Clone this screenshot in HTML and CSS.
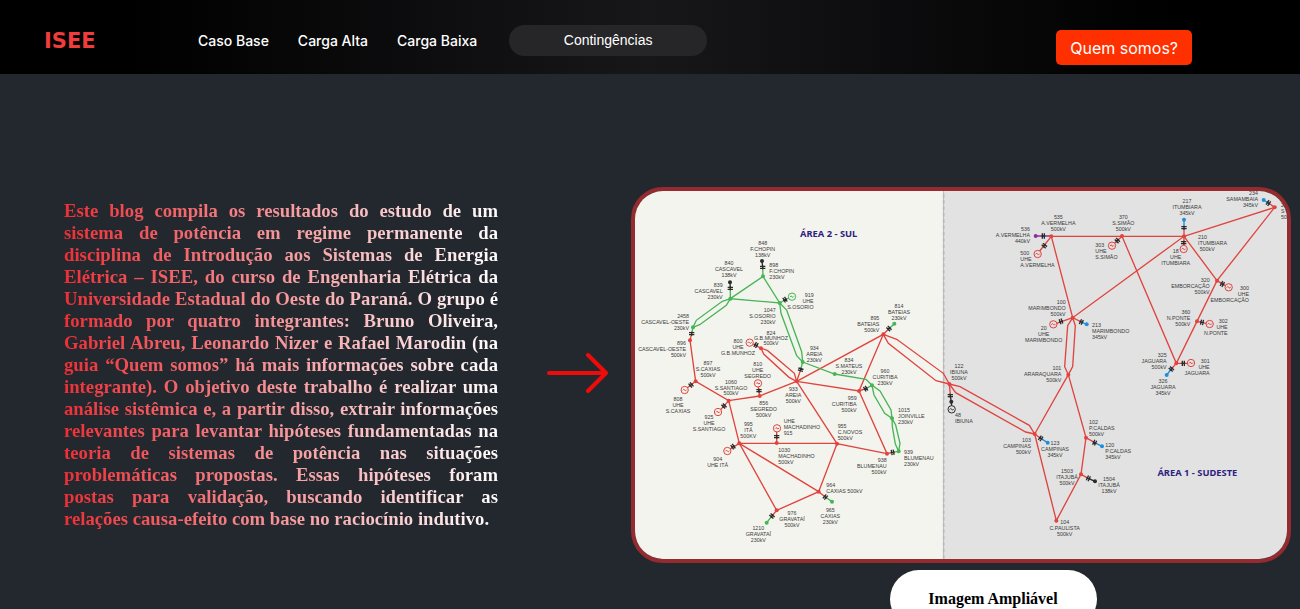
FILE: index.html
```html
<!DOCTYPE html>
<html lang="pt-BR">
<head>
<meta charset="utf-8">
<meta name="viewport" content="width=device-width, initial-scale=1">
<title>ISEE</title>
<link rel="stylesheet" href="styles.css">
</head>
<body>
<header class="topbar">
  <a class="logo" href="#">ISEE</a>
  <nav class="nav">
    <a href="#">Caso Base</a>
    <a href="#">Carga Alta</a>
    <a href="#">Carga Baixa</a>
    <button class="nav-menu" type="button">Contingências</button>
  </nav>
  <button class="about" type="button">Quem somos?</button>
</header>

<main class="hero">
  <h3 class="intro">Este blog compila os resultados do estudo de um sistema de potência em regime permanente da disciplina de Introdução aos Sistemas de Energia Elétrica – ISEE, do curso de Engenharia Elétrica da Universidade Estadual do Oeste do Paraná. O grupo é formado por quatro integrantes: Bruno Oliveira, Gabriel Abreu, Leonardo Nizer e Rafael Marodin (na guia “Quem somos” há mais informações sobre cada integrante). O objetivo deste trabalho é realizar uma análise sistêmica e, a partir disso, extrair informações relevantes para levantar hipóteses fundamentadas na teoria de sistemas de potência nas situações problemáticas propostas. Essas hipóteses foram postas&nbsp;para validação, buscando identificar as relações&nbsp;causa-efeito com base no raciocínio indutivo.</h3>

  <svg class="arrow" viewBox="0 0 61 40" aria-hidden="true"><path d="M2 20H57M41 2L59 20L41 38"/></svg>

  <figure class="diagram">
    <svg viewBox="0 0 1956 1104" preserveAspectRatio="xMidYMid slice" role="img" aria-label="Diagrama do sistema elétrico">
      <defs>
        <path id="brk" d="M-3-8V8M3-8V8M-6 0H6"/>
        <g id="gen"><circle r="11"/><path d="M-6 1Q-3-5 0 0T6-1"/></g>
        <circle id="bus" r="6"/>
      </defs>
      <rect class="sul" width="926" height="1104"/>
      <rect class="sudeste" x="926" width="1030" height="1104"/>
      <path class="divider" d="M926 8V1104"/>

      <g class="line red">
        <path d="M378 471L398 479L478 547L485 571M378 471L386 489L462 559L485 571"/>
        <path d="M745 430L785 445L925 547L943 579M745 430L760 457L903 569L943 579"/>
        <path d="M943 579L975 587L1183 703L1199 729M943 579L962 605L1172 723L1199 729"/>
        <path d="M1313 380L1298 404L1289 527L1300 551M1313 380L1321 404L1313 527L1300 551"/>
        <path d="M485 571L745 430L672 600L485 571L606 758L756 788L672 600"/>
        <path d="M606 758L551 902L425 958L313 757L551 902M313 757H606"/>
        <path d="M165 448L182 571L281 629L374 615L485 571M281 629L313 757"/>
        <path d="M1249 136H1647L1919 49L1746 269L1686 391L1624 517L1461 136M1249 136L1313 380L1647 136L1746 269"/>
        <path d="M1300 551L1199 729L1264 989L1338 850L1353 740Z"/>
        <path d="M378 472L355 459M182 571L157 590M281 629L257 656M374 615L370 588M313 757L286 774M425 756V723M485 571L497 536M672 600L692 593M756 788L773 784M745 430L762 413M551 902L571 918M425 958L411 975M170 428L165 448"/>
        <path d="M1249 136L1214 180M1461 136L1439 157M1313 380L1265 397M1313 380L1339 393M1647 110V163M1746 269L1771 284M1686 391L1713 397M1624 517H1657M1624 517L1609 534M1919 49L1900 36M1199 729L1217 742M1353 740L1379 755M1338 850L1360 862M943 579L946 614"/>
      </g>
      <g class="line green">
        <path d="M174 409L184 388L262 331L286 323L274 343L194 401Z"/>
        <path d="M286 323L384 256L434 336Z"/>
        <path d="M434 336L455 357L500 482L503 513L485 494L438 367Z"/>
        <path d="M503 513L599 549L693 565L711 583L735 600L768 657L771 682L749 667L717 612L711 583"/>
        <path d="M771 682L782 702L795 757L791 781L781 759L772 707Z"/>
        <path d="M434 336L461 321M503 513L497 536M711 583L692 593M791 781L773 784M778 398L762 413M591 932L571 918M395 995L411 975M174 409L170 428M384 256L383 229M286 323V292"/>
      </g>
      <path class="line blue" d="M1355 400L1339 393M1647 86V110M1595 552L1609 534M1886 27L1900 36M1238 755L1217 742M1401 766L1379 755"/>
      <path class="line dark" d="M381 210L383 229M285 274L286 292M946 614L950 644M1380 871L1360 862"/>
      <path class="line violet" d="M1202 135H1249"/>

      <g class="gen red">
        <use href="#gen" x="344" y="455"/><use href="#gen" x="149" y="597"/><use href="#gen" x="249" y="663"/><use href="#gen" x="369" y="577"/><use href="#gen" x="277" y="780"/><use href="#gen" x="426" y="712"/>
        <use href="#gen" x="1208" y="189"/><use href="#gen" x="1431" y="164"/><use href="#gen" x="1255" y="400"/><use href="#gen" x="1646" y="174"/><use href="#gen" x="1781" y="289"/><use href="#gen" x="1724" y="399"/><use href="#gen" x="1668" y="516"/>
      </g>
      <g class="gen green"><use href="#gen" x="471" y="317"/></g>
      <g class="gen dark"><use href="#gen" x="950" y="655"/></g>

      <g class="bus red">
        <use href="#bus" x="165" y="448"/><use href="#bus" x="485" y="571"/><use href="#bus" x="378" y="472"/><use href="#bus" x="745" y="430"/><use href="#bus" x="182" y="571"/><use href="#bus" x="281" y="629"/><use href="#bus" x="374" y="615"/><use href="#bus" x="313" y="757"/><use href="#bus" x="425" y="756"/><use href="#bus" x="606" y="758"/><use href="#bus" x="551" y="902"/><use href="#bus" x="425" y="958"/><use href="#bus" x="672" y="600"/><use href="#bus" x="756" y="788"/><use href="#bus" x="943" y="579"/>
        <use href="#bus" x="1249" y="136"/><use href="#bus" x="1461" y="135"/><use href="#bus" x="1313" y="380"/><use href="#bus" x="1300" y="551"/><use href="#bus" x="1647" y="136"/><use href="#bus" x="1919" y="49"/><use href="#bus" x="1746" y="269"/><use href="#bus" x="1686" y="391"/><use href="#bus" x="1624" y="517"/><use href="#bus" x="1199" y="729"/><use href="#bus" x="1353" y="740"/><use href="#bus" x="1338" y="850"/><use href="#bus" x="1264" y="989"/>
      </g>
      <g class="bus green">
        <use href="#bus" x="384" y="256"/><use href="#bus" x="286" y="323"/><use href="#bus" x="174" y="409"/><use href="#bus" x="434" y="336"/><use href="#bus" x="503" y="513"/><use href="#bus" x="599" y="549"/><use href="#bus" x="778" y="398"/><use href="#bus" x="591" y="932"/><use href="#bus" x="395" y="995"/><use href="#bus" x="711" y="583"/><use href="#bus" x="771" y="682"/><use href="#bus" x="791" y="781"/>
      </g>
      <g class="bus blue">
        <use href="#bus" x="1355" y="400"/><use href="#bus" x="1647" y="86"/><use href="#bus" x="1886" y="27"/><use href="#bus" x="1595" y="552"/><use href="#bus" x="1238" y="755"/><use href="#bus" x="1401" y="766"/>
      </g>
      <g class="bus dark">
        <use href="#bus" x="381" y="210"/><use href="#bus" x="285" y="274"/><use href="#bus" x="949" y="632"/><use href="#bus" x="1380" y="871"/>
      </g>
      <g class="bus violet"><use href="#bus" x="1202" y="135"/></g>

      <g class="breaker">
        <use href="#brk" transform="translate(383 229) rotate(90)"/><use href="#brk" transform="translate(286 292) rotate(90)"/><use href="#brk" transform="translate(170 428) rotate(90)"/><use href="#brk" transform="translate(450 326) rotate(-30)"/><use href="#brk" transform="translate(497 536) rotate(105)"/><use href="#brk" transform="translate(363 462) rotate(30)"/><use href="#brk" transform="translate(762 413) rotate(-45)"/><use href="#brk" transform="translate(168 582) rotate(-40)"/><use href="#brk" transform="translate(267 645) rotate(-45)"/><use href="#brk" transform="translate(372 599) rotate(90)"/><use href="#brk" transform="translate(294 767) rotate(-35)"/><use href="#brk" transform="translate(425 737) rotate(90)"/><use href="#brk" transform="translate(571 918) rotate(40)"/><use href="#brk" transform="translate(411 975) rotate(-50)"/><use href="#brk" transform="translate(692 593) rotate(-30)"/><use href="#brk" transform="translate(773 784) rotate(-10)"/><use href="#brk" transform="translate(946 614) rotate(90)"/>
        <use href="#brk" transform="translate(1225 135)"/><use href="#brk" transform="translate(1228 164) rotate(-50)"/><use href="#brk" transform="translate(1447 149) rotate(-45)"/><use href="#brk" transform="translate(1278 391) rotate(-20)"/><use href="#brk" transform="translate(1339 393) rotate(25)"/><use href="#brk" transform="translate(1647 110) rotate(90)"/><use href="#brk" transform="translate(1646 155) rotate(90)"/><use href="#brk" transform="translate(1900 36) rotate(35)"/><use href="#brk" transform="translate(1762 279) rotate(30)"/><use href="#brk" transform="translate(1701 394) rotate(12)"/><use href="#brk" transform="translate(1645 517)"/><use href="#brk" transform="translate(1609 534) rotate(-50)"/><use href="#brk" transform="translate(1217 742) rotate(35)"/><use href="#brk" transform="translate(1379 755) rotate(25)"/><use href="#brk" transform="translate(1360 862) rotate(25)"/>
      </g>

      <g class="area">
        <text x="581" y="138">ÁREA 2 - SUL</text>
        <text x="1687" y="854">ÁREA 1 - SUDESTE</text>
      </g>

      <g class="label mid">
        <text y="162"><tspan x="383">848</tspan><tspan x="383" dy="18">F.CHOPIN</tspan><tspan x="383" dy="18">138kV</tspan></text>
        <text y="222"><tspan x="282">840</tspan><tspan x="282" dy="18">CASCAVEL</tspan><tspan x="282" dy="18">138kV</tspan></text>
        <text y="431"><tspan x="408">824</tspan><tspan x="408" dy="17">G.B.MUNHOZ</tspan><tspan x="408" dy="15">500kV</tspan></text>
        <text y="457"><tspan x="309">800</tspan><tspan x="309" dy="18">UHE</tspan><tspan x="309" dy="18">G.B.MUNHOZ</tspan></text>
        <text y="477"><tspan x="538">934</tspan><tspan x="538" dy="18">AREIA</tspan><tspan x="538" dy="18">230kV</tspan></text>
        <text y="521"><tspan x="219">897</tspan><tspan x="219" dy="18">S.CAXIAS</tspan><tspan x="219" dy="18">500kV</tspan></text>
        <text y="525"><tspan x="368">810</tspan><tspan x="368" dy="18">UHE</tspan><tspan x="368" dy="18">SEGREDO</tspan></text>
        <text y="580"><tspan x="288">1060</tspan><tspan x="288" dy="17">S.SANTIAGO</tspan><tspan x="288" dy="15">500kV</tspan></text>
        <text y="629"><tspan x="129">808</tspan><tspan x="129" dy="18">UHE</tspan><tspan x="129" dy="18">S.CAXIAS</tspan></text>
        <text y="685"><tspan x="222">925</tspan><tspan x="222" dy="18">UHE</tspan><tspan x="222" dy="18">S.SANTIAGO</tspan></text>
        <text y="641"><tspan x="386">856</tspan><tspan x="386" dy="18">SEGREDO</tspan><tspan x="386" dy="18">500kV</tspan></text>
        <text y="600"><tspan x="475">933</tspan><tspan x="475" dy="18">AREIA</tspan><tspan x="475" dy="18">500kV</tspan></text>
        <text y="705"><tspan x="340">995</tspan><tspan x="340" dy="18">ITÁ</tspan><tspan x="340" dy="18">500KV</tspan></text>
        <text y="810"><tspan x="248">904</tspan><tspan x="248" dy="18">UHE ITÁ</tspan></text>
        <text y="973"><tspan x="471">976</tspan><tspan x="471" dy="18">GRAVATAÍ</tspan><tspan x="471" dy="18">500kV</tspan></text>
        <text y="1017"><tspan x="370">1210</tspan><tspan x="370" dy="18">GRAVATAÍ</tspan><tspan x="370" dy="18">230kV</tspan></text>
        <text y="351"><tspan x="792">814</tspan><tspan x="792" dy="18">BATEIAS</tspan><tspan x="792" dy="18">230kV</tspan></text>
        <text y="513"><tspan x="642">834</tspan><tspan x="642" dy="18">S.MATEUS</tspan><tspan x="642" dy="18">230kV</tspan></text>
        <text y="531"><tspan x="972">122</tspan><tspan x="972" dy="18">IBIUNA</tspan><tspan x="972" dy="18">500kV</tspan></text>
        <text y="547"><tspan x="750">960</tspan><tspan x="750" dy="18">CURITIBA</tspan><tspan x="750" dy="18">230kV</tspan></text>
        <text y="963"><tspan x="586">965</tspan><tspan x="586" dy="18">CAXIAS</tspan><tspan x="586" dy="18">230kV</tspan></text>
        <text y="84"><tspan x="1270">535</tspan><tspan x="1270" dy="18">A.VERMELHA</tspan><tspan x="1270" dy="18">500kV</tspan></text>
        <text y="84"><tspan x="1465">370</tspan><tspan x="1465" dy="18">S.SIMÃO</tspan><tspan x="1465" dy="18">500kV</tspan></text>
        <text y="417"><tspan x="1226">20</tspan><tspan x="1226" dy="18">UHE</tspan><tspan x="1226" dy="18">MARIMBONDO</tspan></text>
        <text y="35"><tspan x="1656">217</tspan><tspan x="1656" dy="18">ITUMBIARA</tspan><tspan x="1656" dy="18">345kV</tspan></text>
        <text y="186"><tspan x="1622">18</tspan><tspan x="1622" dy="18">UHE</tspan><tspan x="1622" dy="18">ITUMBIARA</tspan></text>
        <text y="576"><tspan x="1584">326</tspan><tspan x="1584" dy="18">JAGUARA</tspan><tspan x="1584" dy="18">345kV</tspan></text>
        <text y="761"><tspan x="1260">123</tspan><tspan x="1260" dy="18">CAMPINAS</tspan><tspan x="1260" dy="18">345kV</tspan></text>
        <text y="846"><tspan x="1296">1503</tspan><tspan x="1296" dy="18">ITAJUBÁ</tspan><tspan x="1296" dy="18">500kV</tspan></text>
        <text y="870"><tspan x="1422">1504</tspan><tspan x="1422" dy="18">ITAJUBÁ</tspan><tspan x="1422" dy="18">138kV</tspan></text>
        <text y="1000"><tspan x="1289">104</tspan><tspan x="1289" dy="18">C.PAULISTA</tspan><tspan x="1289" dy="18">500kV</tspan></text>
      </g>
      <g class="label end">
        <text y="287"><tspan x="263">839</tspan><tspan x="263" dy="18">CASCAVEL</tspan><tspan x="263" dy="18">230kV</tspan></text>
        <text y="319"><tspan x="536">919</tspan><tspan x="536" dy="18">UHE</tspan><tspan x="536" dy="18">S.OSORIO</tspan></text>
        <text y="362"><tspan x="422">1047</tspan><tspan x="422" dy="18">S.OSORIO</tspan><tspan x="422" dy="18">230kV</tspan></text>
        <text y="381"><tspan x="162">2458</tspan><tspan x="162" dy="18">CASCAVEL-OESTE</tspan><tspan x="162" dy="18">230kV</tspan></text>
        <text y="461"><tspan x="153">896</tspan><tspan x="153" dy="18">CASCAVEL-OESTE</tspan><tspan x="153" dy="18">500kV</tspan></text>
        <text y="388"><tspan x="733">895</tspan><tspan x="733" dy="18">BATEIAS</tspan><tspan x="733" dy="18">500kV</tspan></text>
        <text y="627"><tspan x="665">959</tspan><tspan x="665" dy="18">CURITIBA</tspan><tspan x="665" dy="18">500kV</tspan></text>
        <text y="814"><tspan x="755">938</tspan><tspan x="755" dy="18">BLUMENAU</tspan><tspan x="755" dy="18">500kV</tspan></text>
        <text y="119"><tspan x="1185">536</tspan><tspan x="1185" dy="18">A.VERMELHA</tspan><tspan x="1185" dy="18">440kV</tspan></text>
        <text y="340"><tspan x="1292">100</tspan><tspan x="1292" dy="18">MARIMBONDO</tspan><tspan x="1292" dy="18">500kV</tspan></text>
        <text y="538"><tspan x="1279">101</tspan><tspan x="1279" dy="18">ARARAQUARA</tspan><tspan x="1279" dy="18">500kV</tspan></text>
        <text y="11"><tspan x="1869">234</tspan><tspan x="1869" dy="18">SAMAMBAIA</tspan><tspan x="1869" dy="18">345kV</tspan></text>
        <text y="272"><tspan x="1724">320</tspan><tspan x="1724" dy="18">EMBORCAÇÃO</tspan><tspan x="1724" dy="18">500kV</tspan></text>
        <text y="296"><tspan x="1842">300</tspan><tspan x="1842" dy="18">UHE</tspan><tspan x="1842" dy="18">EMBORCAÇÃO</tspan></text>
        <text y="370"><tspan x="1666">360</tspan><tspan x="1666" dy="18">N.PONTE</tspan><tspan x="1666" dy="18">500kV</tspan></text>
        <text y="395"><tspan x="1778">302</tspan><tspan x="1778" dy="18">UHE</tspan><tspan x="1778" dy="18">N.PONTE</tspan></text>
        <text y="497"><tspan x="1595">325</tspan><tspan x="1595" dy="18">JAGUARA</tspan><tspan x="1595" dy="18">500kV</tspan></text>
        <text y="516"><tspan x="1724">301</tspan><tspan x="1724" dy="18">UHE</tspan><tspan x="1724" dy="18">JAGUARA</tspan></text>
        <text y="753"><tspan x="1188">103</tspan><tspan x="1188" dy="18">CAMPINAS</tspan><tspan x="1188" dy="18">500kV</tspan></text>
      </g>
      <g class="label">
        <text y="228"><tspan x="403">898</tspan><tspan x="403" dy="18">F.CHOPIN</tspan><tspan x="403" dy="18">230kV</tspan></text>
        <text y="695"><tspan x="446">UHE</tspan><tspan x="446" dy="18">MACHADINHO</tspan><tspan x="446" dy="18">915</tspan></text>
        <text y="782"><tspan x="430">1030</tspan><tspan x="430" dy="18">MACHADINHO</tspan><tspan x="430" dy="18">500kV</tspan></text>
        <text y="663"><tspan x="789">1015</tspan><tspan x="789" dy="18">JOINVILLE</tspan><tspan x="789" dy="18">230kV</tspan></text>
        <text y="711"><tspan x="608">955</tspan><tspan x="608" dy="18">C.NOVOS</tspan><tspan x="608" dy="18">500kV</tspan></text>
        <text y="788"><tspan x="807">939</tspan><tspan x="807" dy="18">BLUMENAU</tspan><tspan x="807" dy="18">230kV</tspan></text>
        <text y="889"><tspan x="574">964</tspan><tspan x="574" dy="18">CAXIAS 500kV</tspan></text>
        <text y="678"><tspan x="960">48</tspan><tspan x="960" dy="18">IBIUNA</tspan></text>
        <text y="192"><tspan x="1156">500</tspan><tspan x="1156" dy="18">UHE</tspan><tspan x="1156" dy="18">A.VERMELHA</tspan></text>
        <text y="169"><tspan x="1381">303</tspan><tspan x="1381" dy="18">UHE</tspan><tspan x="1381" dy="18">S.SIMÃO</tspan></text>
        <text y="408"><tspan x="1371">213</tspan><tspan x="1371" dy="18">MARIMBONDO</tspan><tspan x="1371" dy="18">345kV</tspan></text>
        <text y="48"><tspan x="1938">2</tspan><tspan x="1938" dy="18">S</tspan><tspan x="1938" dy="18">50</tspan></text>
        <text y="144"><tspan x="1689">210</tspan><tspan x="1689" dy="18">ITUMBIARA</tspan><tspan x="1694" dy="18">500kV</tspan></text>
        <text y="699"><tspan x="1362">102</tspan><tspan x="1362" dy="18">P.CALDAS</tspan><tspan x="1362" dy="18">500kV</tspan></text>
        <text y="769"><tspan x="1411">120</tspan><tspan x="1411" dy="18">P.CALDAS</tspan><tspan x="1411" dy="18">345kV</tspan></text>
      </g>
    </svg>
  </figure>

  <div class="actions"><button class="enlarge" type="button">Imagem Ampliável</button></div>
</main>
</body>
</html>
```

FILE: styles.css
```css
* { box-sizing: border-box; }

body {
  margin: 0;
  background: #23272e;
  color: #fff;
  font-family: "Liberation Serif", "Times New Roman", serif;
}

button {
  border: 0;
  cursor: pointer;
}

.topbar {
  display: flex;
  align-items: center;
  height: 74px;
  padding: 0 108px 0 44px;
  background: linear-gradient(90deg, #000 10%, #17171a 50%, #000 90%);
}

.logo {
  width: 154px;
  padding-top: 8px;
  color: #f03c3c;
  font: bold 21px "DejaVu Sans", sans-serif;
  text-decoration: none;
}

.nav {
  display: flex;
  align-items: center;
  gap: 29px;
  padding-top: 6px;
}

.nav a {
  color: #fff;
  font: 500 14px Inter, sans-serif;
  text-decoration: none;
}

.nav-menu {
  width: 198px;
  height: 31px;
  margin-left: 3px;
  border-radius: 16px;
  background: #262628;
  color: #fff;
  font: 14px "Liberation Sans", Arial, sans-serif;
}

.about {
  height: 35px;
  margin: 21px 0 0 auto;
  padding: 0 14px;
  border-radius: 5px;
  background: #ff3000;
  color: #fff;
  font: 16px Inter, sans-serif;
}

.hero {
  display: grid;
  grid-template-columns: 483fr 61px 683fr;
  align-items: center;
  padding: 113px 9px 0 64px;
}

.intro {
  margin: 0 49px 20px 0;
  background: linear-gradient(90deg, #ee2f35, #fff);
  background-clip: text;
  -webkit-background-clip: text;
  color: transparent;
  line-height: 22px;
  text-align: justify;
}

.arrow {
  width: 61px;
  margin-bottom: 4px;
  fill: none;
  stroke: #f00b0b;
  stroke-width: 4;
  stroke-linecap: round;
  stroke-linejoin: round;
}

.diagram {
  margin: 0 0 0 23px;
  overflow: hidden;
  border: 4px solid #952b2f;
  border-radius: 32px;
}

.diagram svg {
  display: block;
  width: 100%;
}

.sul { fill: #f4f4ee; }
.sudeste { fill: #e2e2e2; }
.divider { stroke: #b9b9bd; stroke-width: 5; stroke-dasharray: 12 7; }

.red { --ink: #e0443e; }
.green { --ink: #45b556; }
.blue { --ink: #1e8fdc; }
.dark { --ink: #2b2b2b; }
.violet { --ink: #8a2f9b; }

.line { fill: none; stroke: var(--ink); stroke-width: 4; }
.gen { fill: none; stroke: var(--ink); stroke-width: 3; }
.bus { fill: var(--ink); }
.breaker { fill: none; stroke: #2b2b2b; stroke-width: 4; }

.area {
  fill: #2e2280;
  font: bold 28px "Noto Sans", sans-serif;
  text-anchor: middle;
}

.label {
  fill: #3a3a3a;
  font: 16px "Liberation Sans", Arial, sans-serif;
}

.mid { text-anchor: middle; }
.end { text-anchor: end; }

.actions {
  grid-column: 3;
  display: flex;
  justify-content: center;
  height: 39px;
  margin-top: 7px;
  padding-left: 87px;
}

.enlarge {
  width: 207px;
  height: 58px;
  border-radius: 29px;
  background: #fff;
  color: #000;
  font: bold 16px "Liberation Serif", "Times New Roman", serif;
}
```
